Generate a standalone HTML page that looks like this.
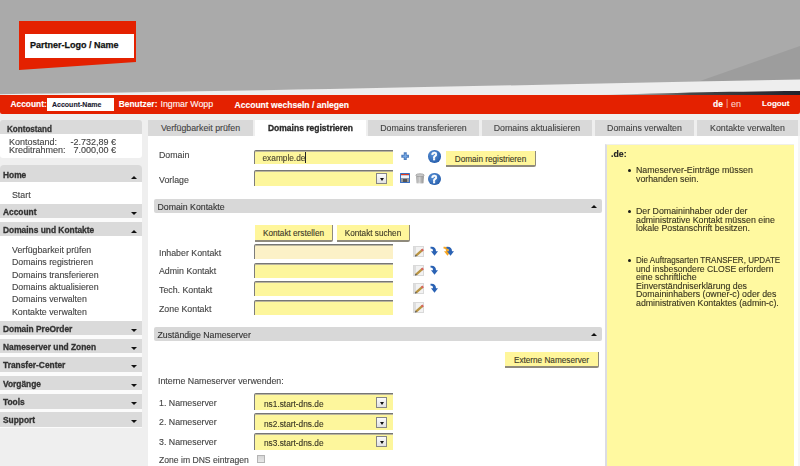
<!DOCTYPE html>
<html><head><meta charset="utf-8">
<style>
*{margin:0;padding:0;box-sizing:border-box}
html,body{width:800px;height:466px;overflow:hidden;background:#efefef;font-family:"Liberation Sans",sans-serif;color:#3c3c3c}
.a,.lbl,.si,.tab,.sh span,.sec span,.btn{-webkit-text-stroke:0.12px currentColor}
.sh span{-webkit-text-stroke:0.3px currentColor}
.a{position:absolute;white-space:nowrap}
#hdr{position:absolute;left:0;top:0;width:800px;height:96px}
#bar{position:absolute;left:0;top:95px;width:800px;height:18.5px;background:#e42100;border-radius:0 0 2px 2px}
.wb{color:#fff;font-weight:bold;font-size:8.5px}
.sb{position:absolute;left:0;width:142px;background:#fff}
.sh{position:absolute;left:0;width:142px;height:14px;background:#dadada;font-weight:bold;font-size:8.4px;color:#333}
.sh span{position:absolute;left:3px;top:3px}
.sh i{position:absolute;right:5.2px;top:8px;width:0;height:0;border-left:3px solid transparent;border-right:3px solid transparent}
.up{border-bottom:3px solid #111}
.dn{border-top:3px solid #111}
.si{position:absolute;left:12px;font-size:8.8px;color:#444}
.tab{position:absolute;top:120px;height:16px;background:#d9d9d9;font-size:8.8px;color:#444;text-align:center;line-height:16px}
.lbl{position:absolute;left:159px;font-size:8.8px;color:#444}
.inp{position:absolute;left:254px;width:139px;height:14px;background:#fdf69c;border-top:1px solid #767676;border-left:1px solid #7c7c7c;border-top-left-radius:2px;box-shadow:inset 0 1px 0 #b9b49c}
.btn{position:absolute;height:16px;background:#fff69b;border-right:1px solid #8f8a7c;border-bottom:2px solid #8f8a7c;border-bottom-right-radius:2px;font-size:8.2px;color:#3e3a28;text-align:center;line-height:16px;padding-top:1px}
.sec{position:absolute;left:154px;width:448px;height:14px;background:#d8d8d8;border-radius:2px;font-size:8.75px;color:#333}
.sec span{position:absolute;left:3.5px;top:3px}
.sec i{position:absolute;right:5px;top:6px;width:0;height:0;border-left:3px solid transparent;border-right:3px solid transparent;border-bottom:3px solid #111}
.dd{position:absolute;width:11px;height:11px;background:linear-gradient(#fbfbfb,#e2e2e2);border:1px solid #858585}
.dd:after{content:"";position:absolute;left:2.5px;top:4px;border-left:2.5px solid transparent;border-right:2.5px solid transparent;border-top:3px solid #111}
.help{position:absolute;width:12.5px;height:12.5px;border-radius:50%;background:radial-gradient(circle at 40% 35%,#5d95d8,#2a62b0 70%,#22559c);color:#fff;font-weight:bold;font-size:10px;text-align:center;line-height:13px;-webkit-text-stroke:0.6px #fff}
#wrap{position:absolute;left:0;top:0;width:800px;height:466px;filter:blur(0.3px)}
</style></head><body><div id="wrap">
<!-- header -->
<svg id="hdr" width="800" height="96" viewBox="0 0 800 96">
<rect x="0" y="0" width="800" height="96" fill="#aaaaaa"/>
<path d="M700 81 L800 46 L800 81 Z" fill="#9d9d9d"/>
<defs><linearGradient id="dg" x1="0" x2="1"><stop offset="0" stop-color="#555" stop-opacity="0"/><stop offset="0.5" stop-color="#333" stop-opacity="0.9"/><stop offset="1" stop-color="#22222c"/></linearGradient></defs>
<path d="M0 94.2 C200 92.2 450 86.5 800 79.5 L800 96 L0 96 Z" fill="#eeeeee"/>
<path d="M580 95.5 C660 93.2 720 91.6 800 91 L800 95.5 Z" fill="url(#dg)"/>
<path d="M19 21 L136 21 L136 62 L19 70 Z" fill="#e42100"/>
<rect x="25" y="34" width="109" height="24" fill="#fff"/>
<text x="30" y="47.5" font-family="Liberation Sans" font-weight="bold" font-size="9" fill="#111" stroke="#111" stroke-width="0.25">Partner-Logo / Name</text>
</svg>
<div id="bar"></div>
<div class="a wb" style="left:10.5px;top:99px;font-size:8.4px">Account:</div>
<div class="a" style="left:47px;top:98px;width:67px;height:13px;background:#fff"></div>
<div class="a" style="left:52px;top:100px;font-size:8px;font-weight:bold;color:#1a1a30;transform:scaleX(0.875);transform-origin:0 0">Account-Name</div>
<div class="a wb" style="left:118.8px;top:99px;font-size:8.4px">Benutzer:</div>
<div class="a" style="left:160.5px;top:99px;font-size:8.8px;color:#fff6f4">Ingmar Wopp</div>
<div class="a wb" style="left:234.5px;top:99.5px;font-size:8.55px">Account wechseln / anlegen</div>
<div class="a wb" style="left:713px;top:99px">de</div>
<div class="a" style="left:726px;top:98px;font-size:9px;color:#f0a090">|</div>
<div class="a" style="left:731px;top:99px;font-size:9px;color:#fbd0c8">en</div>
<div class="a wb" style="left:762px;top:99px;font-size:8.1px">Logout</div>

<!-- sidebar -->
<div class="sh" style="top:120px;border-radius:3px 3px 0 0"><span style="left:6.5px;top:4px;font-size:8.8px;transform:scaleX(0.92);transform-origin:0 0">Kontostand</span></div>
<div class="sb" style="top:134px;height:24px;border-radius:0 0 3px 3px"></div>
<div class="a" style="left:9px;top:138px;font-size:9px;color:#444;line-height:8px">Kontostand:<br>Kreditrahmen:</div>
<div class="a" style="left:70px;top:138px;width:46px;text-align:right;font-size:9px;color:#444;line-height:8px">-2.732,89 €<br>7.000,00 €</div>

<div class="sb" style="top:182px;height:246px;background:#fbfbfb"></div>
<div class="sh" style="top:165px;height:17px;border-radius:4px 4px 0 0"><span style="top:5px">Home</span><i class="up" style="top:11px"></i></div>
<div class="sb" style="top:182px;height:22px"></div>
<div class="si" style="top:190px">Start</div>
<div class="sh" style="top:204px"><span>Account</span><i class="dn"></i></div>
<div class="sh" style="top:222px"><span>Domains und Kontakte</span><i class="up"></i></div>
<div class="sb" style="top:236px;height:85px"></div>
<div class="si" style="top:245px">Verfügbarkeit prüfen</div>
<div class="si" style="top:257.4px">Domains registrieren</div>
<div class="si" style="top:269.8px">Domains transferieren</div>
<div class="si" style="top:282px">Domains aktualisieren</div>
<div class="si" style="top:294.3px">Domains verwalten</div>
<div class="si" style="top:306.5px">Kontakte verwalten</div>
<div class="sh" style="top:320.5px;height:14.4px"><span>Domain PreOrder</span><i class="dn"></i></div>
<div class="sh" style="top:338.9px;height:14.5px"><span>Nameserver und Zonen</span><i class="dn"></i></div>
<div class="sh" style="top:357.2px;height:14.7px"><span>Transfer-Center</span><i class="dn"></i></div>
<div class="sh" style="top:375.7px;height:14.8px"><span>Vorgänge</span><i class="dn"></i></div>
<div class="sh" style="top:393.9px;height:14.7px"><span>Tools</span><i class="dn"></i></div>
<div class="sh" style="top:412.2px;height:14.5px"><span>Support</span><i class="dn"></i></div>

<!-- tabs -->
<div class="tab" style="left:148px;width:105px">Verfügbarkeit prüfen</div>
<div class="tab" style="left:255px;width:111px;background:#fff;font-weight:bold;color:#2a2a2a;font-size:8.5px;-webkit-text-stroke:0.3px #2a2a2a">Domains registrieren</div>
<div class="tab" style="left:368px;width:111px">Domains transferieren</div>
<div class="tab" style="left:482px;width:110px">Domains aktualisieren</div>
<div class="tab" style="left:595px;width:99px">Domains verwalten</div>
<div class="tab" style="left:697px;width:101px">Kontakte verwalten</div>

<!-- content panel -->
<div class="a" style="left:148px;top:135.5px;width:652px;height:331px;background:#fff;border-right:2px solid #f6f6f6"></div>


<!-- form -->
<div class="lbl" style="top:150px">Domain</div>
<div class="inp" style="top:150px"></div>
<div class="a" style="left:262.5px;top:152px;font-size:8.3px;color:#4a4530">example.de<span style="display:inline-block;width:1px;height:11px;background:#222;vertical-align:-2px"></span></div>
<svg class="a" style="left:400.5px;top:151.5px" width="8.5" height="8.5" viewBox="0 0 8.5 8.5"><path d="M4.25 0.3V8.2M0.3 4.25H8.2" stroke="#4f7fc0" stroke-width="3"/><path d="M4.25 2V6.5M2 4.25H6.5" stroke="#7fb0ea" stroke-width="1"/></svg>
<div class="help" style="left:428px;top:150px">?</div>
<div class="btn" style="left:446px;top:151px;width:90px">Domain registrieren</div>

<div class="lbl" style="top:175px">Vorlage</div>
<div class="inp" style="top:170px;height:16px"></div>
<div class="dd" style="left:376px;top:173px"></div>
<svg class="a" style="left:400px;top:173px" width="10" height="10" viewBox="0 0 10 10"><rect x="0" y="0" width="10" height="10" rx="0.5" fill="#3a6fc0"/><rect x="1" y="1" width="8" height="1.3" fill="#e03a20"/><rect x="1" y="2.3" width="8" height="3" fill="#f4f4f4"/><rect x="1" y="5.3" width="8" height="3.7" fill="#9a9a9a"/><rect x="3" y="6" width="4" height="3" fill="#555"/></svg>
<svg class="a" style="left:415px;top:173px" width="10" height="11" viewBox="0 0 10 11"><defs><linearGradient id="tg" x1="0" x2="1"><stop offset="0" stop-color="#9a9a9a"/><stop offset="0.4" stop-color="#e6e6e6"/><stop offset="1" stop-color="#8a8a8a"/></linearGradient></defs><path d="M1 2.2 L9 2.2 L8.4 10.2 Q5 11 1.6 10.2 Z" fill="url(#tg)"/><ellipse cx="5" cy="2.2" rx="4.2" ry="1.5" fill="#c8c8c8" stroke="#8c8c8c" stroke-width="0.6"/><path d="M3.3 4 V9.5 M5 4.2 V9.8 M6.7 4 V9.5" stroke="#a0a0a0" stroke-width="0.5"/></svg>
<div class="help" style="left:428px;top:172.6px">?</div>

<div class="sec" style="top:199px"><span>Domain Kontakte</span><i></i></div>
<div class="btn" style="left:255px;top:225px;width:78px;height:16.5px">Kontakt erstellen</div>
<div class="btn" style="left:337px;top:225px;width:73px;height:16.5px">Kontakt suchen</div>
<div class="lbl" style="top:248px">Inhaber Kontakt</div>
<div class="inp" style="top:244px;height:15px;background:#fcf1c7"></div>
<div class="lbl" style="top:266px">Admin Kontakt</div>
<div class="inp" style="top:263px;height:15px"></div>
<div class="lbl" style="top:285px">Tech. Kontakt</div>
<div class="inp" style="top:281px;height:15px"></div>
<div class="lbl" style="top:303.5px">Zone Kontakt</div>
<div class="inp" style="top:300px;height:15px"></div>

<div class="sec" style="top:327px"><span>Zuständige Nameserver</span><i></i></div>
<div class="btn" style="left:505px;top:352px;width:94px">Externe Nameserver</div>
<div class="lbl" style="top:376px;left:158px">Interne Nameserver verwenden:</div>
<div class="lbl" style="top:398px">1. Nameserver</div>
<div class="inp" style="top:393px;height:17px"></div>
<div class="a" style="left:264px;top:399px;font-size:8.3px;color:#3a3626">ns1.start-dns.de</div>
<div class="dd" style="left:376px;top:396.5px"></div>
<div class="lbl" style="top:417px">2. Nameserver</div>
<div class="inp" style="top:413px;height:17px"></div>
<div class="a" style="left:264px;top:419px;font-size:8.3px;color:#3a3626">ns2.start-dns.de</div>
<div class="dd" style="left:376px;top:416.5px"></div>
<div class="lbl" style="top:437px">3. Nameserver</div>
<div class="inp" style="top:433px;height:17px"></div>
<div class="a" style="left:264px;top:438px;font-size:8.3px;color:#3a3626">ns3.start-dns.de</div>
<div class="dd" style="left:376px;top:436px"></div>
<div class="lbl" style="top:455px;font-size:8.6px">Zone im DNS eintragen</div>
<div class="a" style="left:256.5px;top:454.5px;width:8.5px;height:8.5px;border:1px solid #b4b4b4;background:linear-gradient(#d6d6d6,#e8e8e8)"></div>

<!-- info panel -->
<div class="a" style="left:605px;top:144px;width:189px;height:322px;background:#fff9a0;border-left:2px solid #dcdce4;border-top:1px solid #f0f0ea"></div>
<div class="a" style="left:611px;top:149px;font-size:8.8px;font-weight:bold;color:#222">.de:</div>

<div class="a" style="left:628px;top:166px;font-size:8.8px;line-height:8.6px;color:#38341f"><span style="position:absolute;left:-0.5px;top:3px;width:3px;height:3px;border-radius:50%;background:#1a1a1a"></span><div style="position:absolute;left:8px;top:0">Nameserver-Einträge müssen<br>vorhanden sein.</div></div>
<div class="a" style="left:628px;top:207px;font-size:8.8px;line-height:8.6px;color:#38341f"><span style="position:absolute;left:-0.5px;top:3px;width:3px;height:3px;border-radius:50%;background:#1a1a1a"></span><div style="position:absolute;left:8px;top:0">Der Domaininhaber oder der<br>administrative Kontakt müssen eine<br>lokale Postanschrift besitzen.</div></div>
<div class="a" style="left:628px;top:256px;font-size:8.8px;line-height:8.57px;color:#38341f"><span style="position:absolute;left:-0.5px;top:3px;width:3px;height:3px;border-radius:50%;background:#1a1a1a"></span><div style="position:absolute;left:8px;top:0"><span style="display:inline-block;transform:scaleX(0.915);transform-origin:0 0">Die Auftragsarten TRANSFER, UPDATE</span><br><span style="display:inline-block;transform:scaleX(0.98);transform-origin:0 0">und insbesondere CLOSE erfordern</span><br>eine schriftliche<br>Einverständniserklärung des<br>Domaininhabers (owner-c) oder des<br>administrativen Kontaktes (admin-c).</div></div>
<svg width="0" height="0" style="position:absolute"><defs>
<g id="ed"><rect x="0.5" y="0.5" width="10" height="10" fill="#f2f2f2" stroke="#d9d9d9"/><rect x="1" y="1" width="2" height="9" fill="#dedede"/><path d="M3 9.6 L9.2 4.2" stroke="#b99442" stroke-width="2.3"/><path d="M8.6 4.7 L10.2 3.3" stroke="#d9625a" stroke-width="2.3"/><path d="M2.2 10.2 L3.4 9.2" stroke="#555" stroke-width="1.2"/></g>
<g id="ar"><path d="M0.5 0.8 C4 0.3 6 2 6 5.2 L8 5.2 L4.5 9.8 L1 5.2 L3 5.2 C3 3.2 2.2 2.6 0.5 2.6 Z" fill="#2a62b4"/></g>
<g id="ar2"><path d="M0.5 0.8 C4 0.3 6 2 6 5.2 L8 5.2 L4.5 9.8 L1 5.2 L3 5.2 C3 3.2 2.2 2.6 0.5 2.6 Z" fill="#f6a623"/></g>
</defs></svg>
<svg class="a" style="left:413px;top:246px" width="11" height="11"><use href="#ed"/></svg>
<svg class="a" style="left:430px;top:246px" width="9" height="11"><use href="#ar"/></svg>
<svg class="a" style="left:443px;top:246px" width="12" height="11"><use href="#ar2"/><use href="#ar" x="3"/></svg>
<svg class="a" style="left:413px;top:265px" width="11" height="11"><use href="#ed"/></svg>
<svg class="a" style="left:430px;top:265px" width="9" height="11"><use href="#ar"/></svg>
<svg class="a" style="left:413px;top:283px" width="11" height="11"><use href="#ed"/></svg>
<svg class="a" style="left:430px;top:283px" width="9" height="11"><use href="#ar"/></svg>
<svg class="a" style="left:413px;top:302px" width="11" height="11"><use href="#ed"/></svg>
</div></body></html>
